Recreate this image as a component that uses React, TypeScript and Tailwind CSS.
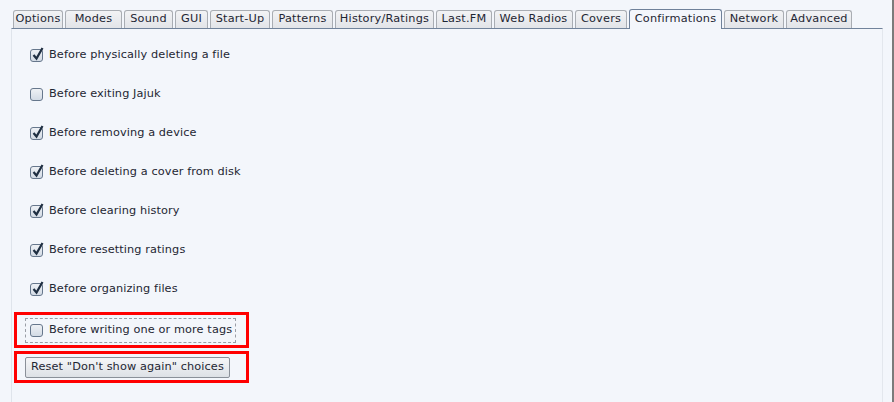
import React from "react";

const tabs = [
  { label: "Options", w: 50 },
  { label: "Modes", w: 57 },
  { label: "Sound", w: 49 },
  { label: "GUI", w: 33 },
  { label: "Start-Up", w: 60 },
  { label: "Patterns", w: 61 },
  { label: "History/Ratings", w: 99 },
  { label: "Last.FM", w: 56 },
  { label: "Web Radios", w: 79 },
  { label: "Covers", w: 52 },
  { label: "Confirmations", w: 93, active: true },
  { label: "Network", w: 60 },
  { label: "Advanced", w: 66 },
];

const options = [
  { label: "Before physically deleting a file", checked: true },
  { label: "Before exiting Jajuk", checked: false },
  { label: "Before removing a device", checked: true },
  { label: "Before deleting a cover from disk", checked: true },
  { label: "Before clearing history", checked: true },
  { label: "Before resetting ratings", checked: true },
  { label: "Before organizing files", checked: true },
];

const Box = ({ checked }: { checked: boolean }) => (
  <div className="relative w-[13px] h-[13px] rounded-[3px] border border-[#66778c] bg-gradient-to-b from-[#eef1f5] to-[#d3dbe5] shrink-0">
    {checked && (
      <svg className="absolute left-[1px] -top-[3px]" width="12" height="14" viewBox="0 0 12 14">
        <path d="M1.5 8 L4.5 11.5 L10.5 1" fill="none" stroke="#1f2f42" strokeWidth="2.2" />
      </svg>
    )}
  </div>
);

const App = () => {
  return (
    <div
      className="relative w-[894px] h-[402px] bg-[#f3f6fb] border-r-2 border-[#7b7b7b] overflow-hidden text-[#1e2633]"
      style={{ fontFamily: '"DejaVu Sans", sans-serif' }}
    >
      <div className="flex gap-[2px] pl-[13px] pt-[10px] h-[28px] items-end">
        {tabs.map((t) =>
          t.active ? (
            <div
              key={t.label}
              style={{ width: t.w }}
              className="relative z-10 h-[20px] -mb-[1px] flex items-center justify-center text-[11.3px] tracking-[0.2px] bg-[#f3f6fb] border border-b-0 border-[#6f819a] rounded-t-[3px]"
            >
              {t.label}
            </div>
          ) : (
            <div
              key={t.label}
              style={{ width: t.w }}
              className="h-[18px] flex items-center justify-center text-[11.3px] tracking-[0.2px] bg-gradient-to-b from-[#f2f3f5] to-[#e2e4e8] border border-b-0 border-[#a9adb3] rounded-t-[3px]"
            >
              {t.label}
            </div>
          )
        )}
      </div>
      <div className="ml-[11px] w-[872px] h-[374px] border-t border-[#71839b] border-l border-l-[#dfe4eb] border-r border-r-[#e3e7ed] pt-[7px]">
        <div className="flex flex-col">
          {options.map((o) => (
            <div key={o.label} className="h-[39px] flex items-center pl-[18px] gap-[6px] text-[11.3px] tracking-[0.1px]">
              <Box checked={o.checked} />
              <span>{o.label}</span>
            </div>
          ))}
        </div>
        <div className="ml-[2px] mt-[3px] w-[235px] h-[36px] border-[3px] border-[#ff0000] flex items-center pl-[8px]">
          <div className="h-[25px] w-[211px] border border-dashed border-[#9a9ea6] flex items-center gap-[6px] pl-[4px] text-[11.3px] tracking-[0.1px]">
            <Box checked={false} />
            <span>Before writing one or more tags</span>
          </div>
        </div>
        <div className="ml-[2px] mt-[3px] w-[235px] h-[32px] border-[3px] border-[#ff0000] flex items-center pl-[8px]">
          <button className="h-[21px] w-[205px] border border-[#8a9099] rounded-[2px] bg-gradient-to-b from-[#f5f6f8] to-[#dde1e6] text-[11.3px] tracking-[0.1px] text-[#1e2633] flex items-center justify-center">
            Reset "Don't show again" choices
          </button>
        </div>
      </div>
    </div>
  );
};

export default App;
